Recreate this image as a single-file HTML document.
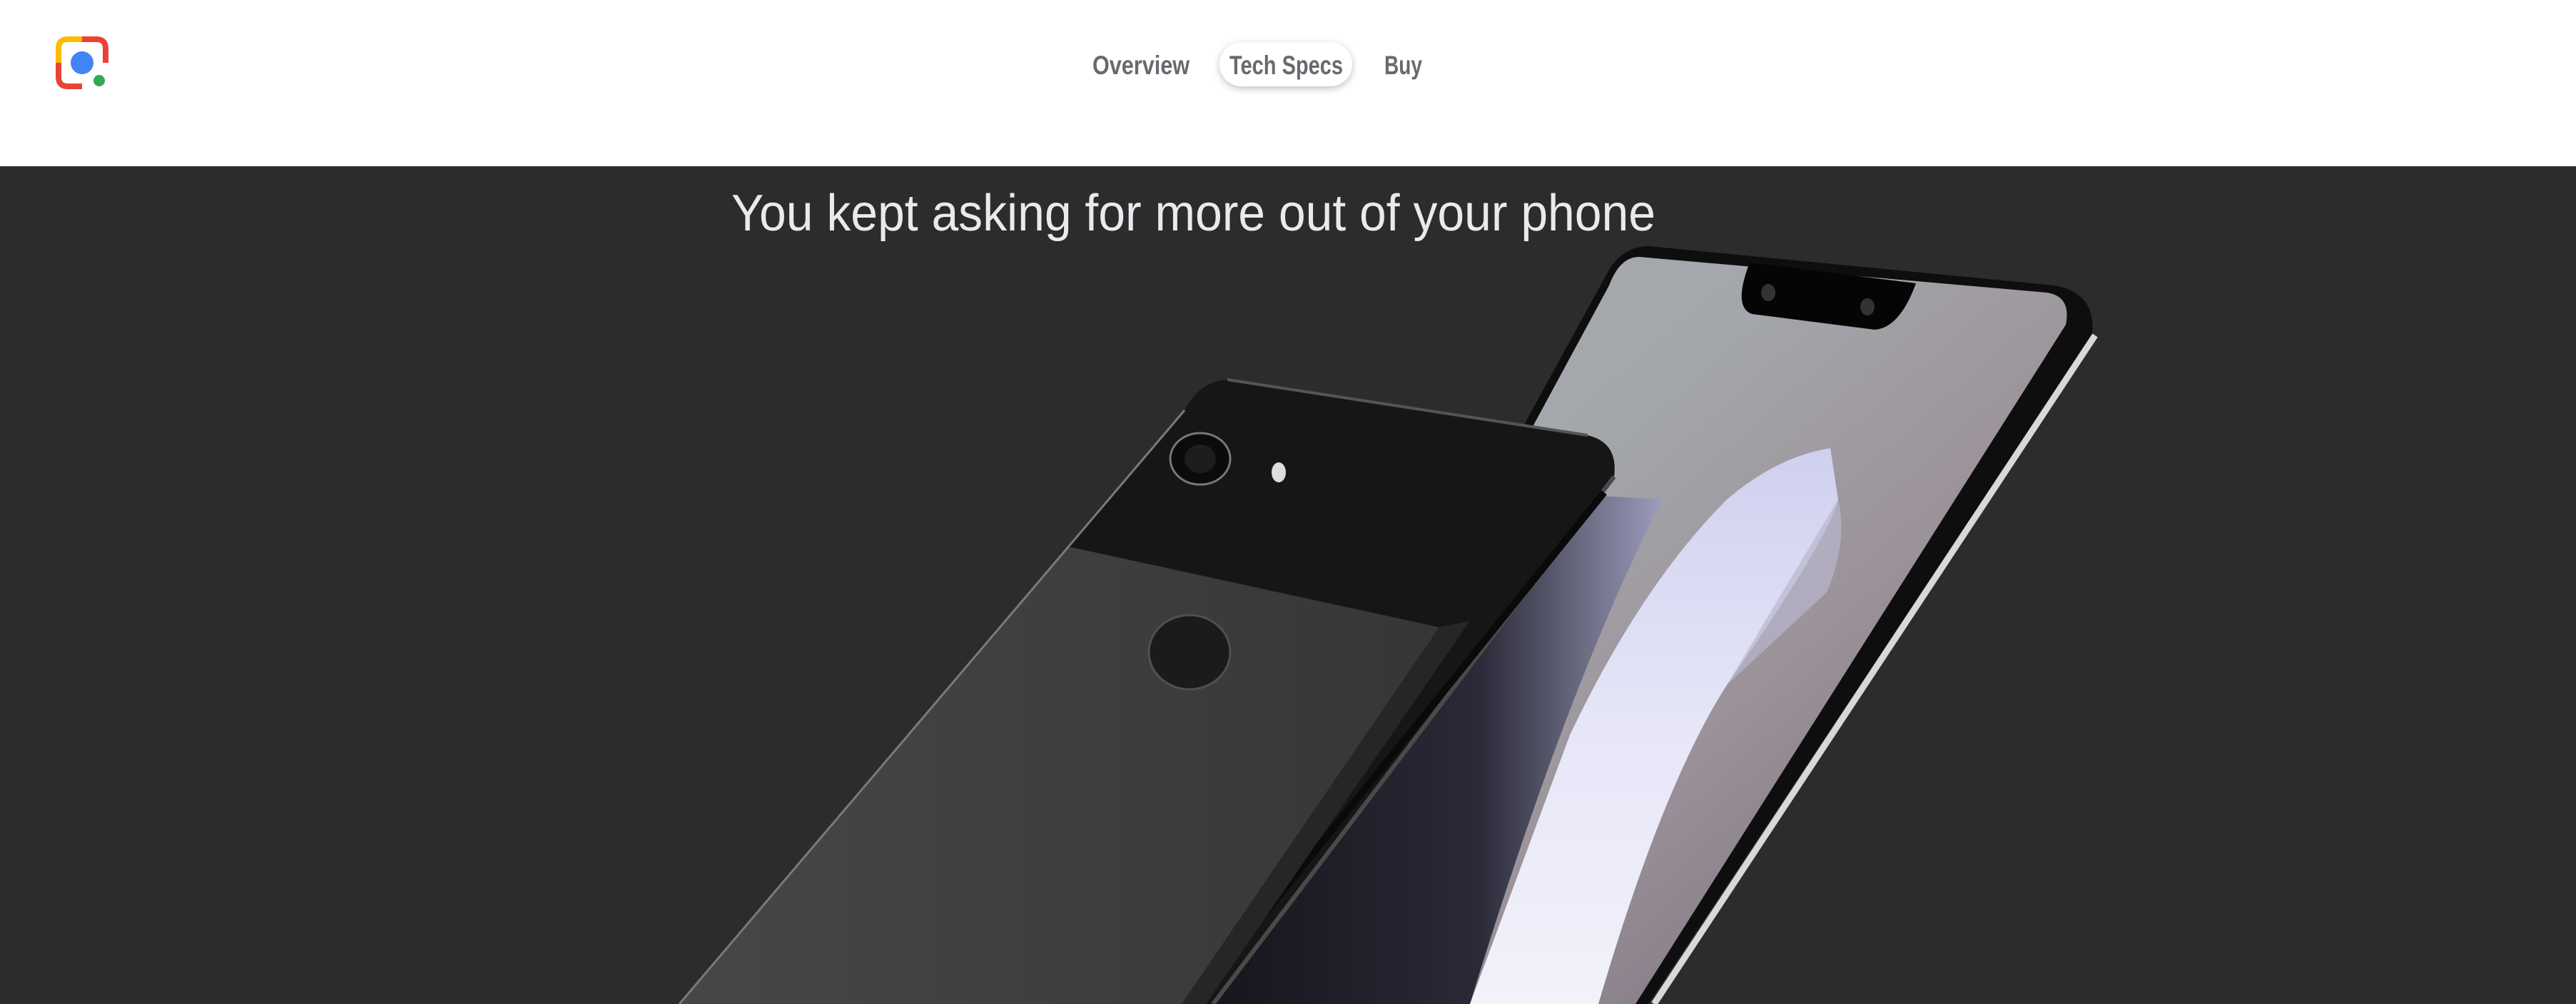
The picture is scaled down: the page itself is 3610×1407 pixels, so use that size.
<!DOCTYPE html>
<html><head><meta charset="utf-8"><style>
html,body{margin:0;padding:0;width:3610px;height:1407px;overflow:hidden;background:#2c2c2c;font-family:"Liberation Sans",sans-serif}
#hdr{position:absolute;left:0;top:0;width:3610px;height:233px;background:#fff}
#art{position:absolute;left:0;top:0}
</style></head><body>
<div id="hdr"></div>
<svg id="art" width="3610" height="1407" viewBox="0 0 3610 1407" xmlns="http://www.w3.org/2000/svg">
<defs>
<linearGradient id="scr" x1="0" y1="0" x2="1" y2="1">
<stop offset="0" stop-color="#a9aeb2"/><stop offset="0.35" stop-color="#a3a6aa"/><stop offset="0.6" stop-color="#9c929a"/><stop offset="1" stop-color="#6c6574"/>
</linearGradient>
<linearGradient id="wave" x1="0" y1="0" x2="0" y2="1">
<stop offset="0" stop-color="#cfd0ee"/><stop offset="0.5" stop-color="#e6e6f8"/><stop offset="1" stop-color="#f2f2fb"/>
</linearGradient>
<linearGradient id="dk" x1="0" y1="0" x2="1" y2="0">
<stop offset="0" stop-color="#15151c"/><stop offset="0.6" stop-color="#2a2a38"/><stop offset="1" stop-color="#9d9dbd"/>
</linearGradient>
<linearGradient id="matte" x1="0" y1="0" x2="1" y2="0">
<stop offset="0" stop-color="#474747"/><stop offset="1" stop-color="#363636"/>
</linearGradient>
<filter id="sh" x="-20%" y="-50%" width="140%" height="200%"><feDropShadow dx="0" dy="3" stdDeviation="5" flood-color="#000" flood-opacity="0.25"/></filter>
</defs>

<path d="M115,55 H95 Q82,55 82,68 V88" fill="none" stroke="#fbbc04" stroke-width="8"/>
<path d="M115,55 H135 Q148,55 148,68 V88" fill="none" stroke="#ea4335" stroke-width="8"/>
<path d="M82,88 V108 Q82,121 95,121 H115" fill="none" stroke="#ea4335" stroke-width="8"/>
<circle cx="115" cy="88" r="16" fill="#4285f4"/>
<circle cx="139" cy="113" r="8" fill="#34a853"/>

<rect x="1709" y="59" width="186" height="62" rx="31" fill="#fff" filter="url(#sh)"/>
<g fill="#5f6368" font-size="37" font-weight="bold" font-family="Liberation Sans, sans-serif" opacity="0.95">
<text x="1531" y="104" textLength="136" lengthAdjust="spacingAndGlyphs">Overview</text>
<text x="1723" y="104" textLength="159" lengthAdjust="spacingAndGlyphs">Tech Specs</text>
<text x="1940" y="104" textLength="53" lengthAdjust="spacingAndGlyphs">Buy</text>
</g>

<text x="1025" y="323" font-size="72" fill="#e8eaed" textLength="1295" lengthAdjust="spacingAndGlyphs" font-family="Liberation Sans, sans-serif">You kept asking for more out of your phone</text>

<path d="M2311,345 L2879,400 Q2938,410 2932,470 L2310,1407 L1690,1407 L2255,378 Q2275,345 2311,345 Z" fill="#0e0e0e"/>
<path d="M2936,470 L2318,1407" stroke="#d8d8d8" stroke-width="9" fill="none"/>
<path d="M2297,360 L2868,410 Q2903,415 2895,455 L2292,1407 L1710,1407 L2255,400 Q2270,360 2297,360 Z" fill="url(#scr)"/>
<path d="M2452,368 L2685,397 Q2662,460 2627,462 L2455,440 Q2428,430 2452,368 Z" fill="#050505"/>
<ellipse cx="2478" cy="410" rx="10" ry="12" fill="#333"/>
<ellipse cx="2617" cy="430" rx="10" ry="12" fill="#333"/>
<path d="M2565,628 Q2490,640 2420,700 Q2300,820 2200,1030 L2060,1407 L2240,1407 Q2330,1100 2420,960 Q2560,760 2576,700 Z" fill="url(#wave)"/>
<path d="M2576,700 Q2590,760 2560,830 L2420,960 Z" fill="#b8b6cc" opacity="0.7"/>
<path d="M2246,695 L2330,700 Q2200,950 2060,1407 L1690,1407 Z" fill="url(#dk)"/>

<path d="M1720,532 L2225,610 Q2268,620 2262,668 L1700,1407 L952,1407 L1660,575 Q1680,535 1720,532 Z" fill="#161616"/>
<path d="M2262,668 L1700,1407" stroke="#4a4a4a" stroke-width="6" fill="none"/>
<path d="M2248,690 L1670,1407" stroke="#0a0a0a" stroke-width="10" fill="none"/>
<path d="M1497,766 L2017,879 L1656,1407 L952,1407 Z" fill="url(#matte)"/>
<path d="M2017,879 L1656,1407 L1690,1407 L2060,870 Z" fill="#262626"/>
<path d="M1660,575 L952,1407" stroke="#7a7a7a" stroke-width="3" fill="none"/>
<path d="M1720,532 L2225,610" stroke="#555" stroke-width="4" fill="none"/>
<ellipse cx="1682" cy="643" rx="42" ry="36" fill="#0b0b0b" stroke="#777" stroke-width="3"/>
<ellipse cx="1682" cy="643" rx="22" ry="20" fill="#1d1d1d"/>
<ellipse cx="1792" cy="662" rx="10" ry="14" fill="#ddd"/>
<ellipse cx="1667" cy="914" rx="57" ry="52" fill="#1b1b1b" stroke="#505050" stroke-width="3"/>
</svg>
</body></html>
